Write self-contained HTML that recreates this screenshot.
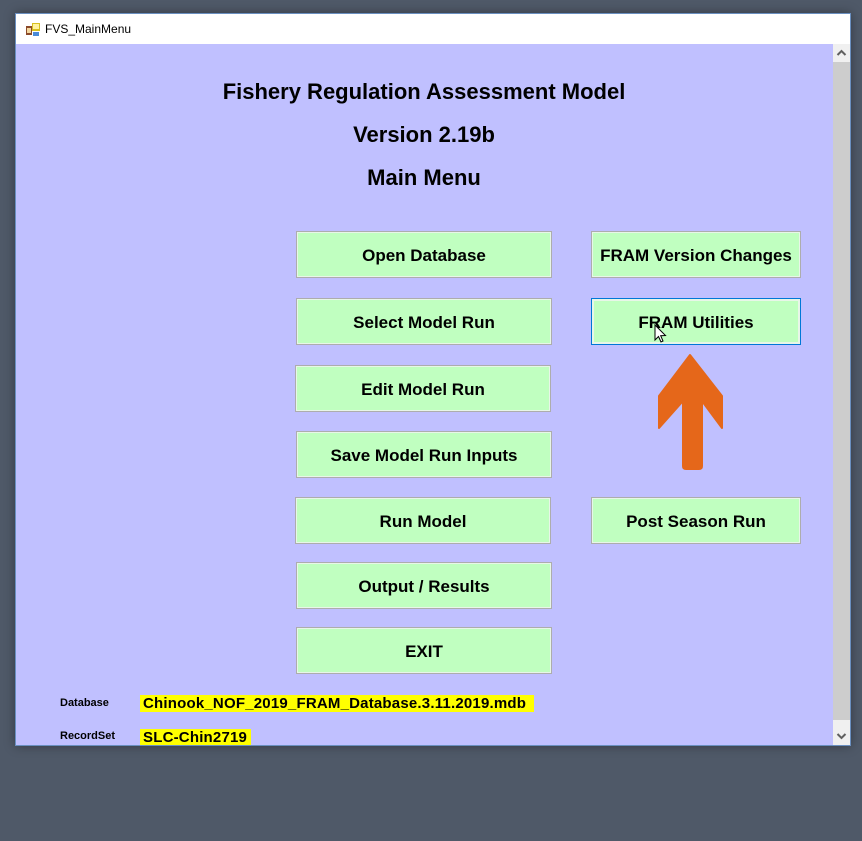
<!DOCTYPE html>
<html><head><style>
*{margin:0;padding:0;box-sizing:border-box}
body{width:862px;height:841px;background:#4f5968;position:relative;overflow:hidden;font-family:"Liberation Sans",Arial,sans-serif}
.win{position:absolute;left:15px;top:13px;width:836px;height:733px;border:1px solid #6a8fc0;background:#c0c0ff;box-shadow:0 0 10px rgba(0,0,0,.35)}
.tb{position:absolute;left:0;top:0;width:834px;height:30px;background:#fff}
.tb span{position:absolute;left:29px;top:8px;font-size:12px;color:#000}
.abs{position:absolute}
.btn{position:absolute;background:#c0ffc0;border:1px solid #adadad;box-shadow:inset 0 0 0 1px #e8f6e8;font-weight:bold;font-size:17px;color:#000;display:flex;align-items:center;justify-content:center;height:47px;padding-top:2px}
.h{position:absolute;width:816px;left:0;text-align:center;font-weight:bold;font-size:22px;color:#000}
.sb{position:absolute;width:17px;height:701px;background:#f0f0f0}
.lbl{position:absolute;font-size:11px;font-weight:bold;color:#000}
.yl{position:absolute;background:#ffff00;font-size:15px;font-weight:bold;color:#000;padding-left:3px;line-height:18px}
</style></head><body>
<div class="win">
<div class="tb">
<svg class="abs" style="left:10px;top:8px" width="14" height="14" viewBox="0 0 14 14"><rect x="0" y="4" width="6" height="9" fill="#8b4a2a"/><rect x="1" y="6" width="4" height="5" fill="#f4d8a0"/><rect x="6" y="1" width="8" height="8" fill="#d8c020"/><rect x="7" y="2" width="6" height="5" fill="#fff3a0"/><rect x="7" y="10" width="6" height="4" fill="#4a8ad8"/></svg>
<span>FVS_MainMenu</span></div>
<div class="h" style="top:65px">Fishery Regulation Assessment Model</div>
<div class="h" style="top:108px">Version 2.19b</div>
<div class="h" style="top:151px">Main Menu</div>
</div>
<div class="btn" style="left:296px;top:231px;width:256px">Open Database</div>
<div class="btn" style="left:296px;top:298px;width:256px">Select Model Run</div>
<div class="btn" style="left:295px;top:365px;width:256px">Edit Model Run</div>
<div class="btn" style="left:296px;top:431px;width:256px">Save Model Run Inputs</div>
<div class="btn" style="left:295px;top:497px;width:256px">Run Model</div>
<div class="btn" style="left:296px;top:562px;width:256px">Output / Results</div>
<div class="btn" style="left:296px;top:627px;width:256px">EXIT</div>
<div class="btn" style="left:591px;top:231px;width:210px">FRAM Version Changes</div>
<div class="btn" style="left:591px;top:298px;width:210px;border-color:#0078d7;box-shadow:inset 0 0 0 2px #e8f6e8">FRAM Utilities</div>
<div class="btn" style="left:591px;top:497px;width:210px">Post Season Run</div>
<svg class="abs" style="left:654px;top:324px" width="14" height="22" viewBox="0 0 14 22"><path d="M1 1 L1 16 L4.5 12.5 L7 18 L9 17 L6.7 11.7 L11.5 11.5 Z" fill="#fff" stroke="#000" stroke-width="1"/></svg>
<svg class="abs" style="left:655px;top:352px" width="70" height="120" viewBox="655 352 70 120"><path d="M690 355 L722 396 L722 428 L702 401 L702 466 Q702 469 699 469 L686 469 Q683 469 683 466 L683 401 L659 428 L659 396 Z" fill="#e5671a" stroke="#e5671a" stroke-width="2" stroke-linejoin="round"/></svg>
<div class="sb" style="left:833px;top:44px"></div>
<div class="abs" style="left:833px;top:62px;width:17px;height:658px;background:#cdcdcd"></div>
<svg class="abs" style="left:836px;top:48px" width="11" height="10"><path d="M1.5 7 L5.5 3 L9.5 7" fill="none" stroke="#606060" stroke-width="2"/></svg>
<svg class="abs" style="left:836px;top:731px" width="11" height="10"><path d="M1.5 3 L5.5 7 L9.5 3" fill="none" stroke="#606060" stroke-width="2"/></svg>
<div class="lbl" style="left:60px;top:697px">Database</div>
<div class="yl" style="left:140px;top:695px;width:394px;height:17px;letter-spacing:0.2px">Chinook_NOF_2019_FRAM_Database.3.11.2019.mdb</div>
<div class="lbl" style="left:60px;top:730px">RecordSet</div>
<div class="yl" style="left:140px;top:729px;width:111px;height:16px;overflow:hidden;letter-spacing:0.2px">SLC-Chin2719</div>
</body></html>
